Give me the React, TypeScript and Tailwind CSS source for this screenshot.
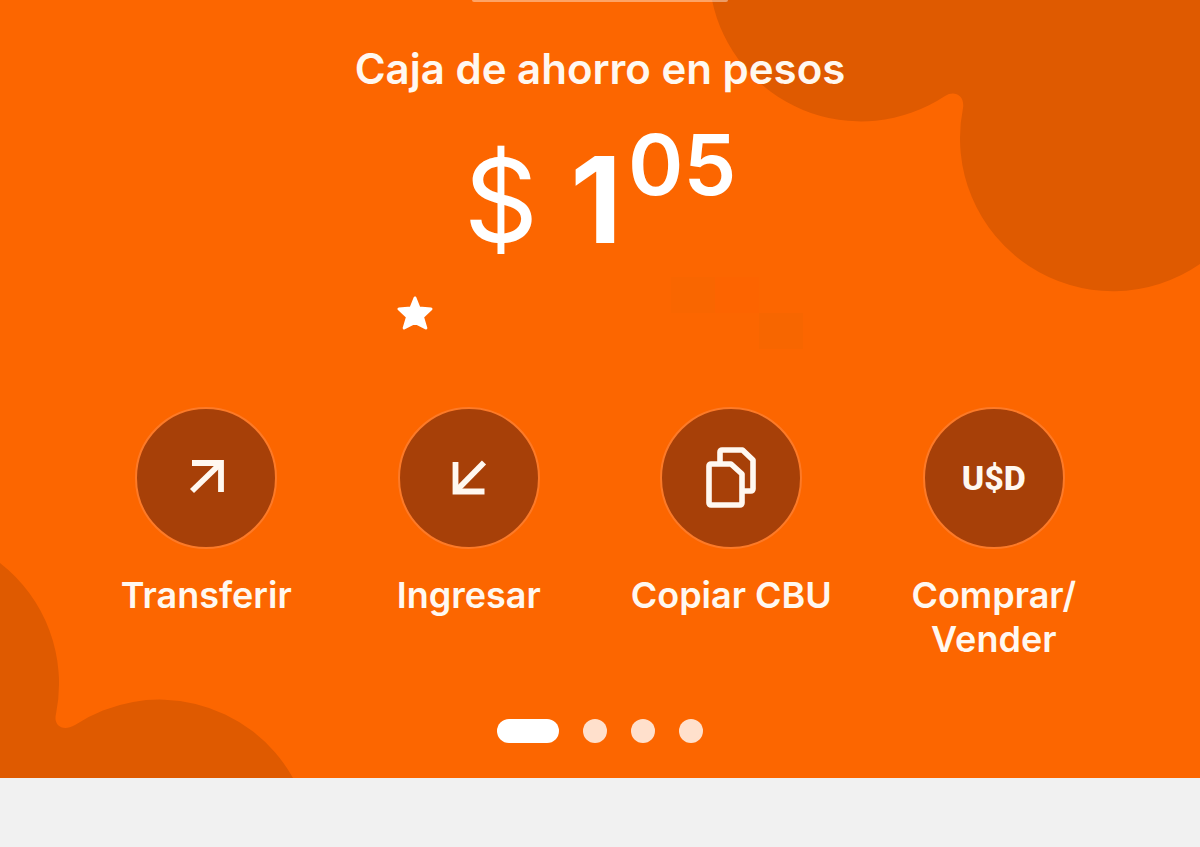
import React from 'react';

interface Action {
  label: string;
  icon: React.ReactNode;
}

const ArrowOut = () => (
  <svg viewBox="0 0 40 40" className="size-10" fill="none" stroke="currentColor" strokeWidth="5.8" aria-hidden="true">
    <path d="M6 5H35V34" />
    <path d="M35 5L6 33" />
  </svg>
);

const ArrowIn = () => (
  <svg viewBox="0 0 40 40" className="size-10" fill="none" stroke="currentColor" strokeWidth="5.8" aria-hidden="true">
    <path d="M6.5 4V33.500H35.500" />
    <path d="M6.5 33.500L35 4.500" />
  </svg>
);

const CopyPages = () => (
  <svg
    viewBox="0 0 64 64"
    className="size-16"
    fill="none"
    stroke="currentColor"
    strokeWidth="5.6"
    strokeLinejoin="round"
    aria-hidden="true"
  >
    <path d="M12 18H32L43 28V57a2 2 0 0 1-2 2H12a2 2 0 0 1-2-2V20a2 2 0 0 1 2-2z" />
    <path d="M21 18V6a2 2 0 0 1 2-2H43.500L54 14V43a2 2 0 0 1-2 2H44" />
  </svg>
);

const actions: Action[] = [
  { label: 'Transferir', icon: <ArrowOut /> },
  { label: 'Ingresar', icon: <ArrowIn /> },
  { label: 'Copiar CBU', icon: <CopyPages /> },
  {
    label: 'Comprar/ Vender',
    icon: <span className="font-['Roboto',sans-serif] text-[34px] font-extrabold leading-none">U$D</span>,
  },
];

const ActionButton = ({ label, icon }: Action) => (
  <button type="button" className="flex cursor-pointer flex-col items-center text-[#fff8f0]">
    <span className="flex size-[142px] items-center justify-center rounded-full border-2 border-[#fd7a27] bg-[#a74008]">
      {icon}
    </span>
    <span className="mt-6 max-w-52 text-4xl/[44px] font-semibold">{label}</span>
  </button>
);

// Rounded shapes behind the content, one per corner
const Backdrop = () => (
  <>
    <svg
      viewBox="0 0 500 300"
      className="pointer-events-none absolute right-0 top-0 w-[500px] fill-[#df5a00]"
      aria-hidden="true"
    >
      <path d="M12 0A152 152 0 0 0 245 96C254 90 265 95 263 108A153 153 0 0 0 500 264V0Z" />
    </svg>
    <svg
      viewBox="0 0 300 215"
      className="pointer-events-none absolute bottom-0 left-0 w-[300px] fill-[#df5a00]"
      aria-hidden="true"
    >
      <path d="M0 0A153 153 0 0 1 56 151C53 163 63 169 75 162A153 153 0 0 1 293 215H0Z" />
    </svg>
    <div className="absolute left-1/2 top-0 h-[2px] w-64 -translate-x-1/2 rounded-b-full bg-white/40" />
  </>
);

export default function App() {
  return (
    <div className="min-h-screen bg-[#f1f1f1] font-['Inter',sans-serif]">
      <main className="relative overflow-hidden bg-[#fc6600] pb-[35px] pt-[45px]">
        <Backdrop />
        <div className="relative flex flex-col items-center">
          <h1 className="text-[42px]/[48px] font-semibold text-[#fff8f0]">Caja de ahorro en pesos</h1>

          <p className="mt-[47px] flex items-start text-white">
            <span className="mr-8 text-[116px]/[120px]">$</span>
            <span className="mr-1.5 text-[120px]/[120px] font-bold">1</span>
            <span className="text-[84px]/[50px] font-semibold">05</span>
          </p>

          {/* Alias stays hidden, only its faint blocks show */}
          <div className="mt-[17px] flex h-[72px] w-[406px] items-center justify-between">
            <svg viewBox="0 0 36 34" className="w-9" fill="white" stroke="white" strokeWidth="3" strokeLinejoin="round" aria-hidden="true">
              <path d="M18 2L22 12L34 13L25.500 21L28.800 32L18 26.500L7.200 32L10.500 21L2 13L14 12Z" />
            </svg>
            <div className="grid grid-cols-3 grid-rows-2" aria-hidden="true">
              <span className="h-9 w-11 bg-[#f96600]" />
              <span className="h-9 w-11 bg-[#fd6400]" />
              <span className="col-start-3 row-start-2 h-9 w-11 bg-[#f76600]" />
            </div>
          </div>

          <div className="mt-[58px] grid w-7/8 grid-cols-4 items-start">
            {actions.map((action) => (
              <ActionButton key={action.label} {...action} />
            ))}
          </div>

          <nav className="mt-[58px] flex gap-6" aria-label="Cuentas">
            <button type="button" aria-label="Cuenta 1" aria-current="true" className="h-6 w-[62px] rounded-full bg-white" />
            <button type="button" aria-label="Cuenta 2" className="size-6 rounded-full bg-[#ffe0cc]" />
            <button type="button" aria-label="Cuenta 3" className="size-6 rounded-full bg-[#ffe0cc]" />
            <button type="button" aria-label="Cuenta 4" className="size-6 rounded-full bg-[#ffe0cc]" />
          </nav>
        </div>
      </main>
    </div>
  );
}
